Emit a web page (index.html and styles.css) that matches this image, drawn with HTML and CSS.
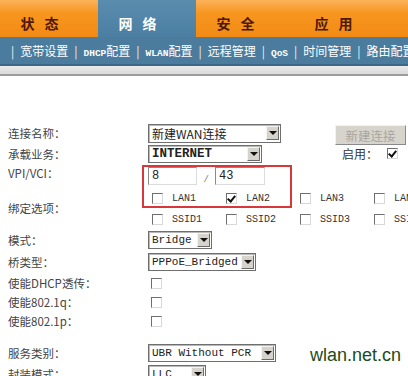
FILE: index.html
```html
<!DOCTYPE html>
<html lang="zh-CN">
<head>
    <meta charset="UTF-8">
    <title>网络 - 宽带设置</title>
    <link rel="stylesheet" href="styles.css">
</head>
<body>
    <div class="tabs">
        <div class="tab">状态</div>
        <div class="tab active">网络</div>
        <div class="tab">安全</div>
        <div class="tab">应用</div>
    </div>

    <div class="subnav">
        <span class="sep">|</span><span class="item">宽带设置</span>
        <span class="sep">|</span><span class="item"><b>DHCP</b>配置</span>
        <span class="sep">|</span><span class="item"><b>WLAN</b>配置</span>
        <span class="sep">|</span><span class="item">远程管理</span>
        <span class="sep">|</span><span class="item"><b>QoS</b></span>
        <span class="sep">|</span><span class="item">时间管理</span>
        <span class="sep">|</span><span class="item">路由配置</span>
    </div>
    <div class="strip"></div>

    <div class="form">
        <div class="row r-name">
            <div class="label">连接名称：</div>
            <div class="select w-name"><span class="val">新建WAN连接</span><span class="arrow"></span></div>
            <div class="btn-disabled">新建连接</div>
        </div>
        <div class="row r-bearer">
            <div class="label">承载业务：</div>
            <div class="select w-bearer"><span class="val bold">INTERNET</span><span class="arrow"></span></div>
            <div class="enable">启用：</div>
            <span class="cb checked"></span>
        </div>
        <div class="row r-vpi">
            <div class="label">VPI/VCI：</div>
            <div class="input w-vpi">8</div>
            <span class="slash">/</span>
            <div class="input w-vci">43</div>
        </div>
        <div class="row r-bind">
            <div class="label">绑定选项：</div>
            <div class="checks">
                <div class="opt"><span class="cb"></span>LAN1</div>
                <div class="opt"><span class="cb checked"></span>LAN2</div>
                <div class="opt"><span class="cb"></span>LAN3</div>
                <div class="opt"><span class="cb"></span>LAN4</div>
                <div class="opt"><span class="cb"></span>SSID1</div>
                <div class="opt"><span class="cb"></span>SSID2</div>
                <div class="opt"><span class="cb"></span>SSID3</div>
                <div class="opt"><span class="cb"></span>SSID4</div>
            </div>
        </div>
        <div class="row r-mode">
            <div class="label">模式：</div>
            <div class="select w-mode"><span class="val">Bridge</span><span class="arrow"></span></div>
        </div>
        <div class="row r-bridge">
            <div class="label">桥类型：</div>
            <div class="select w-bridge"><span class="val">PPPoE_Bridged</span><span class="arrow"></span></div>
        </div>
        <div class="row r-dhcp">
            <div class="label">使能DHCP透传：</div>
            <span class="cb single"></span>
        </div>
        <div class="row r-q">
            <div class="label">使能802.1q：</div>
            <span class="cb single"></span>
        </div>
        <div class="row r-p">
            <div class="label">使能802.1p：</div>
            <span class="cb single"></span>
        </div>
        <div class="row r-service">
            <div class="label">服务类别：</div>
            <div class="select w-service"><span class="val">UBR Without PCR</span><span class="arrow"></span></div>
        </div>
        <div class="row r-encap">
            <div class="label">封装模式：</div>
            <div class="select w-encap"><span class="val">LLC</span><span class="arrow"></span></div>
        </div>
    </div>

    <div class="highlight"></div>
    <div class="watermark">wlan.net.cn</div>
</body>
</html>
```

FILE: styles.css
```css
* {
    margin: 0;
    padding: 0;
    box-sizing: border-box;
}

body {
    width: 408px;
    height: 376px;
    overflow: hidden;
    position: relative;
    background: #fff;
    font-family: "Noto Sans CJK SC", "DejaVu Sans", sans-serif;
    font-size: 12px;
    color: #3a3a3a;
}

/* top tabs */
.tabs {
    display: flex;
    height: 37px;
    background: linear-gradient(180deg, #fbb25a 0%, #f7961f 35%, #f28a14 100%);
}

.tab {
    width: 98px;
    padding-right: 9px;
    display: flex;
    align-items: center;
    justify-content: center;
    padding-top: 8px;
    font-size: 14px;
    font-weight: 700;
    letter-spacing: 10px;
    color: #4e1803;
}

.tab.active {
    background: linear-gradient(180deg, #5a8cae 0%, #4b7fa1 100%);
    color: #fff;
}

/* sub navigation */
.subnav {
    height: 29px;
    background: #4b7c9e;
    border-bottom: 2px solid #3c6886;
    display: flex;
    align-items: center;
    padding-left: 11px;
    color: #fff;
    font-size: 12px;
    white-space: nowrap;
    gap: 6px;
}

.subnav .item b {
    font-family: "Liberation Mono", monospace;
    font-size: 9.5px;
    font-weight: 700;
}

.subnav .sep {
    font-size: 12px;
    opacity: 0.9;
}

.strip {
    height: 10px;
    background: linear-gradient(180deg, #ececec 0%, #dedede 70%);
    border-bottom: 2px solid #9c9c9c;
}

/* form */
.form {
    padding-top: 47px;
}

.row {
    display: flex;
    align-items: center;
}

.label {
    width: 148px;
    padding-left: 8px;
    flex-shrink: 0;
    font-size: 11.5px;
    color: #444;
}

.r-name { height: 20px; }
.r-bearer { height: 21px; }
.r-vpi { height: 23px; }
.r-bind { height: 42px; }
.r-mode { height: 22px; }
.r-bridge { height: 22px; }
.r-dhcp { height: 20px; }
.r-q { height: 18px; }
.r-p { height: 20px; margin-bottom: 11px; }
.r-service { height: 22px; }
.r-encap { height: 20px; }

.r-vpi .label { align-self: flex-start; padding-top: 1px; }

.select {
    height: 18px;
    display: flex;
    align-items: center;
    justify-content: space-between;
    border: 1px solid #6f6f6f;
    box-shadow: inset 1px 1px 0 #b8b8b8;
    background: #fff;
    padding: 0 1px 0 3px;
    font-family: "Liberation Mono", "Noto Sans CJK SC", monospace;
    font-size: 11px;
    color: #222;
}

.select .val.bold {
    font-weight: 700;
    font-size: 12.5px;
}

.arrow {
    width: 13px;
    height: 14px;
    background: #d6d3cc;
    border: 1px solid;
    border-color: #f4f4f4 #6a6a6a #6a6a6a #f4f4f4;
    position: relative;
}

.arrow::after {
    content: '';
    position: absolute;
    left: 2px;
    top: 4px;
    border-left: 4px solid transparent;
    border-right: 4px solid transparent;
    border-top: 4px solid #111;
}

.w-name { width: 133px; height: 19px; }
.w-bearer { width: 114px; }
.w-mode { width: 64px; }
.w-bridge { width: 108px; }
.w-service { width: 128px; }
.w-encap { width: 58px; }

.w-name .val {
    font-family: "Noto Sans CJK SC", sans-serif;
    font-size: 12px;
}

.btn-disabled {
    align-self: flex-start;
    margin-top: 2px;
    margin-left: 54px;
    width: 71px;
    height: 20px;
    display: flex;
    align-items: center;
    justify-content: center;
    background: #d7d4cd;
    border: 1px solid;
    border-color: #f2f2f2 #8a8a8a #8a8a8a #f2f2f2;
    color: #a9a6a0;
    font-size: 12.5px;
}

.enable {
    margin-left: 80px;
    font-size: 12px;
    color: #333;
}

.r-bearer .cb {
    margin-left: 9px;
}

.input {
    height: 18px;
    border: 1px solid;
    border-color: #8a8a8a #dcdcdc #dcdcdc #8a8a8a;
    padding-left: 3px;
    font-family: "Liberation Mono", monospace;
    font-size: 12px;
    color: #222;
    line-height: 16px;
}

.w-vpi { width: 49px; }
.w-vci { width: 50px; }

.slash {
    width: 18px;
    text-align: center;
    font-family: "Liberation Serif", serif;
    font-style: italic;
    font-size: 11px;
    padding-top: 4px;
}

/* checkboxes */
.cb {
    display: inline-block;
    width: 11px;
    height: 11px;
    flex-shrink: 0;
    background: #fff;
    border: 1px solid;
    border-color: #6e6e6e #d8d8d8 #d8d8d8 #6e6e6e;
    position: relative;
}

.cb.checked::after {
    content: '';
    position: absolute;
    left: 2px;
    top: 0;
    width: 3px;
    height: 6px;
    border: solid #111;
    border-width: 0 2px 2px 0;
    transform: rotate(40deg);
}

.cb.single {
    margin-left: 3px;
}

.checks {
    display: grid;
    grid-template-columns: repeat(4, 74px);
    grid-template-rows: 21px 21px;
    margin-left: 4px;
}

.opt {
    display: flex;
    align-items: center;
    gap: 9px;
    font-family: "Liberation Mono", monospace;
    font-size: 10px;
    color: #333;
    padding-top: 2px;
}

/* overlays */
.highlight {
    position: absolute;
    left: 142px;
    top: 165px;
    width: 150px;
    height: 43px;
    border: 2px solid #d8383a;
}

.watermark {
    position: absolute;
    left: 310px;
    top: 345px;
    font-family: "Liberation Sans", Arial, sans-serif;
    font-size: 18px;
    color: #1e4a20;
}
```
